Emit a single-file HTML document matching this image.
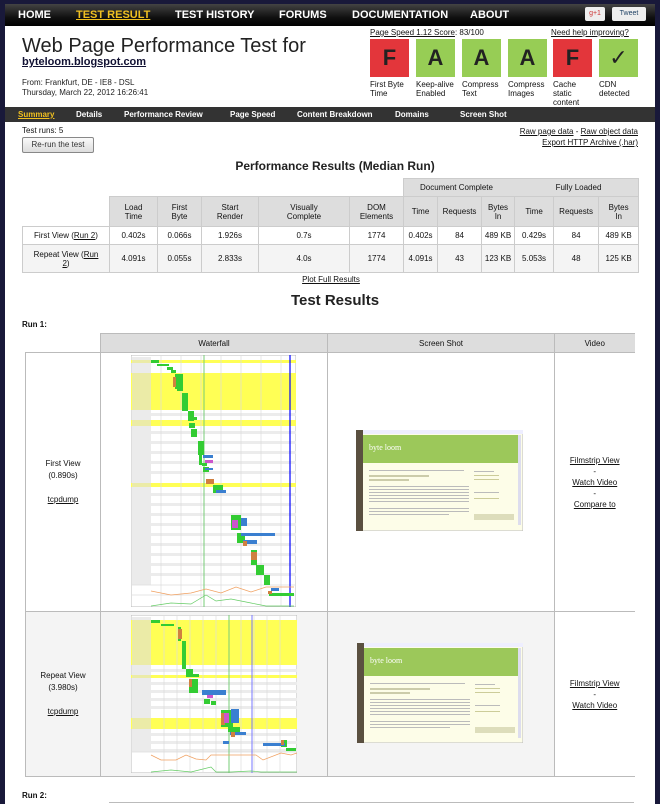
<!DOCTYPE html>
<html><head><meta charset="utf-8"><style>
*{margin:0;padding:0;box-sizing:border-box}
body{width:660px;height:804px;overflow:hidden;background:#19193a;font-family:"Liberation Sans",Arial,sans-serif;color:#111;position:relative}
.page{position:absolute;left:5px;top:0;width:650px;height:804px;background:#fff}
.a{position:absolute}
.nav{left:5px;top:4px;width:650px;height:22px;background:linear-gradient(#444,#111 60%,#000)}
.nav span{position:absolute;top:5px;color:#fff;font-weight:bold;font-size:11px}
.sub{left:5px;top:107px;width:650px;height:15px;background:#333}
.sub span{position:absolute;top:3px;color:#fff;font-weight:bold;font-size:8px}
.box{position:absolute;top:39px;width:39px;height:38px;font-weight:bold;font-size:22px;color:#222;text-align:center;line-height:38px}
.r{background:#e3363b}.g{background:#97cd55}
.lbl{position:absolute;top:80px;font-size:8px;line-height:9px;color:#111}
u{text-decoration:underline}
table{border-collapse:collapse;position:absolute;table-layout:fixed}
.pt td{border:1px solid #ccc;font-size:8px;text-align:center;padding:0}
.pt .h{background:#ddd}
.rt td{border:1px solid #bbb;font-size:8px;text-align:center;vertical-align:middle;padding:0}
</style></head><body>
<div class="page"></div>
<div class="a nav">
<span style="left:13px">HOME</span>
<span style="left:71px;color:#f0c020;text-decoration:underline">TEST RESULT</span>
<span style="left:170px">TEST HISTORY</span>
<span style="left:274px">FORUMS</span>
<span style="left:347px">DOCUMENTATION</span>
<span style="left:465px">ABOUT</span>
<div class="a" style="left:580px;top:3px;width:20px;height:14px;background:#eee;border-radius:2px;font-size:7px;color:#c33;text-align:center;line-height:14px">g+1</div>
<div class="a" style="left:607px;top:3px;width:34px;height:14px;background:#eee;border-radius:2px;font-size:7px;color:#246;text-align:center;line-height:14px">Tweet</div>
</div>
<div class="a" style="left:22px;top:35px;font-size:20px;color:#222">Web Page Performance Test for</div>
<div class="a" style="left:22px;top:56px;font-size:11px;font-weight:bold;color:#113;text-decoration:underline">byteloom.blogspot.com</div>
<div class="a" style="left:22px;top:78px;font-size:8px;color:#222">From: Frankfurt, DE - IE8 - DSL</div>
<div class="a" style="left:22px;top:88px;font-size:8px;color:#222">Thursday, March 22, 2012 16:26:41</div>
<div class="a" style="left:370px;top:28px;font-size:8px"><u>Page Speed 1.12 Score</u>: 83/100</div>
<div class="a" style="left:551px;top:28px;font-size:8px"><u>Need help improving?</u></div>
<div class="box r" style="left:370px">F</div>
<div class="box g" style="left:416px">A</div>
<div class="box g" style="left:462px">A</div>
<div class="box g" style="left:508px">A</div>
<div class="box r" style="left:553px">F</div>
<div class="box g" style="left:599px;font-weight:normal">✓</div>
<div class="lbl" style="left:370px">First Byte<br>Time</div>
<div class="lbl" style="left:416px">Keep-alive<br>Enabled</div>
<div class="lbl" style="left:462px">Compress<br>Text</div>
<div class="lbl" style="left:508px">Compress<br>Images</div>
<div class="lbl" style="left:553px">Cache<br>static<br>content</div>
<div class="lbl" style="left:599px">CDN<br>detected</div>
<div class="a sub">
<span style="left:13px;color:#f0c020;text-decoration:underline">Summary</span>
<span style="left:71px">Details</span>
<span style="left:119px">Performance Review</span>
<span style="left:225px">Page Speed</span>
<span style="left:292px">Content Breakdown</span>
<span style="left:390px">Domains</span>
<span style="left:455px">Screen Shot</span>
</div>
<div class="a" style="left:22px;top:126px;font-size:8px">Test runs: 5</div>
<div class="a" style="left:22px;top:137px;width:72px;height:16px;border:1px solid #888;border-radius:2px;background:linear-gradient(#fafafa,#ddd);font-size:8px;text-align:center;line-height:14px;color:#333">Re-run the test</div>
<div class="a" style="right:22px;top:126px;font-size:8px;text-align:right;line-height:11px"><u>Raw page data</u> - <u>Raw object data</u><br><u>Export HTTP Archive (.har)</u></div>
<div class="a" style="left:0;width:660px;top:159px;text-align:center;font-size:12px;font-weight:bold;color:#222;padding-left:10px">Performance Results (Median Run)</div>
<table class="pt" style="left:22px;top:178px;width:616px">
<colgroup><col style="width:87px"><col style="width:48px"><col style="width:44px"><col style="width:57px"><col style="width:91px"><col style="width:54px"><col style="width:34px"><col style="width:44px"><col style="width:33px"><col style="width:39px"><col style="width:45px"><col style="width:40px"></colgroup>
<tr style="height:18px"><td style="border:none" colspan="6"></td><td class="h" colspan="4" style="border-right:none;text-align:left;padding-left:16px">Document Complete</td><td class="h" colspan="2" style="border-left:none;text-align:left;padding-left:2px">Fully Loaded</td></tr>
<tr style="height:30px"><td style="border-left:none;border-top:none"></td><td class="h">Load<br>Time</td><td class="h">First<br>Byte</td><td class="h">Start<br>Render</td><td class="h">Visually<br>Complete</td><td class="h">DOM<br>Elements</td><td class="h">Time</td><td class="h">Requests</td><td class="h">Bytes<br>In</td><td class="h">Time</td><td class="h">Requests</td><td class="h">Bytes<br>In</td></tr>
<tr style="height:18px"><td>First View (<u>Run 2</u>)</td><td>0.402s</td><td>0.066s</td><td>1.926s</td><td>0.7s</td><td>1774</td><td>0.402s</td><td>84</td><td>489 KB</td><td>0.429s</td><td>84</td><td>489 KB</td></tr>
<tr style="height:28px;background:#f4f4f4"><td>Repeat View (<u>Run<br>2</u>)</td><td>4.091s</td><td>0.055s</td><td>2.833s</td><td>4.0s</td><td>1774</td><td>4.091s</td><td>43</td><td>123 KB</td><td>5.053s</td><td>48</td><td>125 KB</td></tr>
</table>
<div class="a" style="left:0;width:660px;top:275px;text-align:center;font-size:8px;padding-left:2px"><u>Plot Full Results</u></div>
<div class="a" style="left:0;width:660px;top:292px;text-align:center;font-size:15px;font-weight:bold;color:#222;padding-left:10px">Test Results</div>
<div class="a" style="left:22px;top:320px;font-size:8px;font-weight:bold">Run 1:</div>
<table class="rt" style="left:25px;top:333px;width:609px">
<colgroup><col style="width:75px"><col style="width:227px"><col style="width:227px"><col style="width:80px"></colgroup>
<tr style="height:19px"><td style="border:none;border-bottom:1px solid #bbb"></td><td style="background:#ddd">Waterfall</td><td style="background:#ddd">Screen Shot</td><td style="background:#ddd;border-right:none">Video</td></tr>
<tr style="height:259px"><td style="line-height:12px">First View<br>(0.890s)<br><br><u>tcpdump</u></td><td></td><td></td><td style="line-height:11px;border-right:none"><u>Filmstrip View</u><br>-<br><u>Watch Video</u><br>-<br><u>Compare to</u></td></tr>
<tr style="height:165px;background:#f4f4f4"><td style="line-height:12px">Repeat View<br>(3.980s)<br><br><u>tcpdump</u></td><td></td><td></td><td style="line-height:11px;border-right:none;background:#fff"><u>Filmstrip View</u><br>-<br><u>Watch Video</u></td></tr>
</table>
<div class="a" style="left:22px;top:791px;font-size:8px;font-weight:bold">Run 2:</div>
<div class="a" style="left:109px;top:802px;width:525px;height:1px;background:#bbb"></div>

<!-- waterfall 1 -->
<svg class="a" style="left:131px;top:355px" width="165" height="252" viewBox="0 0 165 252">
<rect width="165" height="252" fill="#fff" stroke="#bbb"/>
<rect x="0" y="5" width="165" height="3" fill="#ffff55"/>
<rect x="0" y="18" width="165" height="37" fill="#ffff55"/>
<rect x="0" y="65" width="165" height="6" fill="#ffff55"/>
<rect x="0" y="128" width="165" height="4" fill="#ffff55"/>
<g fill="#ececec"><rect x="20" y="58" width="145" height="3"/><rect x="20" y="76" width="145" height="3"/><rect x="20" y="86" width="145" height="3"/><rect x="20" y="96" width="145" height="3"/><rect x="20" y="106" width="145" height="3"/><rect x="20" y="116" width="145" height="3"/><rect x="20" y="138" width="145" height="3"/><rect x="20" y="148" width="145" height="3"/><rect x="20" y="158" width="145" height="3"/><rect x="20" y="168" width="145" height="3"/><rect x="20" y="178" width="145" height="3"/><rect x="20" y="188" width="145" height="3"/><rect x="20" y="198" width="145" height="3"/><rect x="20" y="208" width="145" height="3"/><rect x="20" y="218" width="145" height="3"/></g>
<rect x="1" y="2" width="19" height="228" fill="#ddd" opacity=".6"/>
<g stroke="#ddd" stroke-width=".7"><line x1="30" y1="0" x2="30" y2="252"/><line x1="50" y1="0" x2="50" y2="252"/><line x1="70" y1="0" x2="70" y2="252"/><line x1="90" y1="0" x2="90" y2="252"/><line x1="110" y1="0" x2="110" y2="252"/><line x1="130" y1="0" x2="130" y2="252"/><line x1="150" y1="0" x2="150" y2="252"/><line x1="0" y1="230" x2="165" y2="230"/><line x1="0" y1="240" x2="165" y2="240"/></g>
<line x1="73" y1="0" x2="73" y2="252" stroke="#7c7" stroke-width="1"/>
<line x1="159" y1="0" x2="159" y2="252" stroke="#00f" stroke-width="1.2"/>
<g fill="#3c3">
<rect x="20" y="5" width="8" height="3"/><rect x="26" y="9" width="12" height="2"/><rect x="36" y="12" width="6" height="3"/><rect x="40" y="15" width="5" height="3"/>
<rect x="44" y="19" width="8" height="15"/><rect x="46" y="34" width="6" height="2"/><rect x="51" y="38" width="6" height="18"/><rect x="57" y="56" width="6" height="10"/><rect x="58" y="62" width="8" height="3"/><rect x="58" y="68" width="6" height="5"/><rect x="60" y="74" width="6" height="8"/>
<rect x="67" y="86" width="6" height="14"/><rect x="68" y="100" width="3" height="10"/><rect x="71" y="108" width="5" height="3"/><rect x="72" y="112" width="6" height="5"/>
<rect x="82" y="130" width="10" height="8"/><rect x="100" y="160" width="10" height="15"/><rect x="106" y="178" width="8" height="10"/><rect x="120" y="195" width="6" height="15"/><rect x="125" y="210" width="8" height="10"/><rect x="133" y="220" width="6" height="10"/><rect x="138" y="238" width="25" height="3"/></g>
<g fill="#3a7fd0"><rect x="72" y="100" width="10" height="3"/><rect x="74" y="113" width="8" height="2"/><rect x="85" y="135" width="10" height="3"/><rect x="110" y="163" width="6" height="8"/><rect x="110" y="178" width="34" height="3"/><rect x="112" y="185" width="14" height="4"/><rect x="140" y="233" width="8" height="3"/></g>
<g fill="#d08040"><rect x="42" y="22" width="3" height="10"/><rect x="75" y="124" width="8" height="5"/><rect x="112" y="186" width="4" height="5"/><rect x="120" y="197" width="6" height="8"/><rect x="137" y="236" width="4" height="3"/></g>
<g fill="#c5c"><rect x="74" y="105" width="8" height="3"/><rect x="101" y="165" width="6" height="8"/></g>
<polyline points="20,236 40,240 60,238 75,234 90,238 105,232 120,237 135,232 163,232" fill="none" stroke="#f0a060" stroke-width=".7"/>
<polyline points="20,251 40,248 60,249 75,240 85,246 100,244 120,248 135,251 163,251" fill="none" stroke="#6c6" stroke-width=".7"/>
</svg>

<!-- waterfall 2 -->
<svg class="a" style="left:131px;top:615px" width="166" height="158" viewBox="0 0 166 158">
<rect width="166" height="158" fill="#fff" stroke="#bbb"/>
<rect x="0" y="5" width="166" height="45" fill="#ffff55"/>
<rect x="0" y="60" width="166" height="3" fill="#ffff55"/>
<rect x="0" y="103" width="166" height="11" fill="#ffff55"/>
<g fill="#ececec"><rect x="20" y="54" width="146" height="3"/><rect x="20" y="67" width="146" height="3"/><rect x="20" y="75" width="146" height="3"/><rect x="20" y="83" width="146" height="3"/><rect x="20" y="91" width="146" height="3"/><rect x="20" y="118" width="146" height="3"/><rect x="20" y="126" width="146" height="3"/><rect x="20" y="134" width="146" height="3"/></g>
<rect x="1" y="2" width="19" height="135" fill="#ddd" opacity=".6"/>
<g stroke="#ddd" stroke-width=".7"><line x1="33" y1="0" x2="33" y2="158"/><line x1="46" y1="0" x2="46" y2="158"/><line x1="59" y1="0" x2="59" y2="158"/><line x1="72" y1="0" x2="72" y2="158"/><line x1="85" y1="0" x2="85" y2="158"/><line x1="110" y1="0" x2="110" y2="158"/><line x1="123" y1="0" x2="123" y2="158"/><line x1="136" y1="0" x2="136" y2="158"/><line x1="149" y1="0" x2="149" y2="158"/><line x1="0" y1="137" x2="166" y2="137"/></g>
<line x1="98" y1="0" x2="98" y2="158" stroke="#7c7"/>
<line x1="121" y1="0" x2="121" y2="158" stroke="#77f"/>
<g fill="#3c3"><rect x="20" y="5" width="9" height="3"/><rect x="30" y="9" width="13" height="2"/><rect x="47" y="12" width="3" height="14"/><rect x="51" y="26" width="4" height="28"/><rect x="55" y="54" width="7" height="8"/><rect x="62" y="59" width="6" height="3"/><rect x="58" y="64" width="9" height="14"/><rect x="73" y="84" width="6" height="5"/><rect x="80" y="86" width="5" height="4"/><rect x="90" y="95" width="12" height="17"/><rect x="97" y="112" width="12" height="5"/><rect x="155" y="133" width="10" height="3"/><rect x="150" y="125" width="6" height="7"/></g>
<g fill="#3a7fd0"><rect x="71" y="75" width="24" height="5"/><rect x="100" y="94" width="8" height="14"/><rect x="99" y="117" width="16" height="3"/><rect x="132" y="128" width="22" height="3"/><rect x="92" y="126" width="6" height="3"/></g>
<g fill="#d08040"><rect x="47" y="14" width="4" height="10"/><rect x="58" y="64" width="3" height="8"/><rect x="90" y="98" width="4" height="12"/><rect x="100" y="117" width="4" height="5"/><rect x="150" y="125" width="3" height="5"/></g>
<g fill="#c5c"><rect x="76" y="80" width="6" height="3"/><rect x="93" y="98" width="5" height="10"/></g>
<polyline points="20,140 30,145 45,145 55,140 65,144 75,145 80,140 110,140 125,140 132,145 150,138 160,140 166,138" fill="none" stroke="#f0a060" stroke-width=".7"/>
<polyline points="20,157 40,155 60,157 80,152 85,157 100,157 120,156 130,157 166,157" fill="none" stroke="#6c6" stroke-width=".7"/>
</svg>

<!-- screenshots -->
<svg class="a" style="left:356px;top:430px" width="167" height="101" viewBox="0 0 167 101">
<rect width="167" height="101" fill="#fdfde8" stroke="#bbb"/>
<rect x="0" y="0" width="167" height="4" fill="#eef"/>
<rect x="0" y="0" width="7" height="101" fill="#5a5040"/>
<rect x="7" y="5" width="155" height="28" fill="#9cc85a"/>
<text x="13" y="20" font-family="Liberation Serif" font-size="8" fill="#fff">byte loom</text>
<g fill="#bbb"><rect x="13" y="40" width="95" height="1"/><rect x="13" y="45" width="60" height="2" fill="#cca"/><rect x="13" y="49" width="40" height="2" fill="#cca"/><rect x="13" y="56" width="100" height="1"/><rect x="13" y="59" width="100" height="1"/><rect x="13" y="62" width="100" height="1"/><rect x="13" y="65" width="100" height="1"/><rect x="13" y="68" width="100" height="1"/><rect x="13" y="71" width="100" height="1"/><rect x="13" y="78" width="100" height="1"/><rect x="13" y="81" width="100" height="1"/><rect x="13" y="84" width="80" height="1"/><rect x="118" y="41" width="20" height="1"/><rect x="118" y="45" width="25" height="1" fill="#cc9"/><rect x="118" y="49" width="25" height="1" fill="#cc9"/><rect x="118" y="62" width="25" height="1"/><rect x="118" y="68" width="25" height="1" fill="#cc9"/><rect x="118" y="84" width="40" height="6" fill="#ddb"/></g>
<rect x="162" y="5" width="3" height="90" fill="#dde"/>
</svg>
<svg class="a" style="left:357px;top:643px" width="166" height="100" viewBox="0 0 166 100">
<rect width="166" height="100" fill="#fdfde8" stroke="#bbb"/>
<rect x="0" y="0" width="166" height="4" fill="#eef"/>
<rect x="0" y="0" width="7" height="100" fill="#5a5040"/>
<rect x="7" y="5" width="155" height="28" fill="#9cc85a"/>
<text x="13" y="20" font-family="Liberation Serif" font-size="8" fill="#fff">byte loom</text>
<g fill="#bbb"><rect x="13" y="40" width="95" height="1"/><rect x="13" y="45" width="60" height="2" fill="#cca"/><rect x="13" y="49" width="40" height="2" fill="#cca"/><rect x="13" y="56" width="100" height="1"/><rect x="13" y="59" width="100" height="1"/><rect x="13" y="62" width="100" height="1"/><rect x="13" y="65" width="100" height="1"/><rect x="13" y="68" width="100" height="1"/><rect x="13" y="71" width="100" height="1"/><rect x="13" y="78" width="100" height="1"/><rect x="13" y="81" width="100" height="1"/><rect x="13" y="84" width="80" height="1"/><rect x="118" y="41" width="20" height="1"/><rect x="118" y="45" width="25" height="1" fill="#cc9"/><rect x="118" y="49" width="25" height="1" fill="#cc9"/><rect x="118" y="62" width="25" height="1"/><rect x="118" y="68" width="25" height="1" fill="#cc9"/><rect x="118" y="84" width="40" height="6" fill="#ddb"/></g>
<rect x="161" y="5" width="3" height="90" fill="#dde"/>
</svg>
<div class="a" style="left:655px;top:0;width:5px;height:804px;background:#19193a"></div>
<div class="a" style="left:0;top:0;width:660px;height:4px;background:#19193a"></div>
</body></html>
